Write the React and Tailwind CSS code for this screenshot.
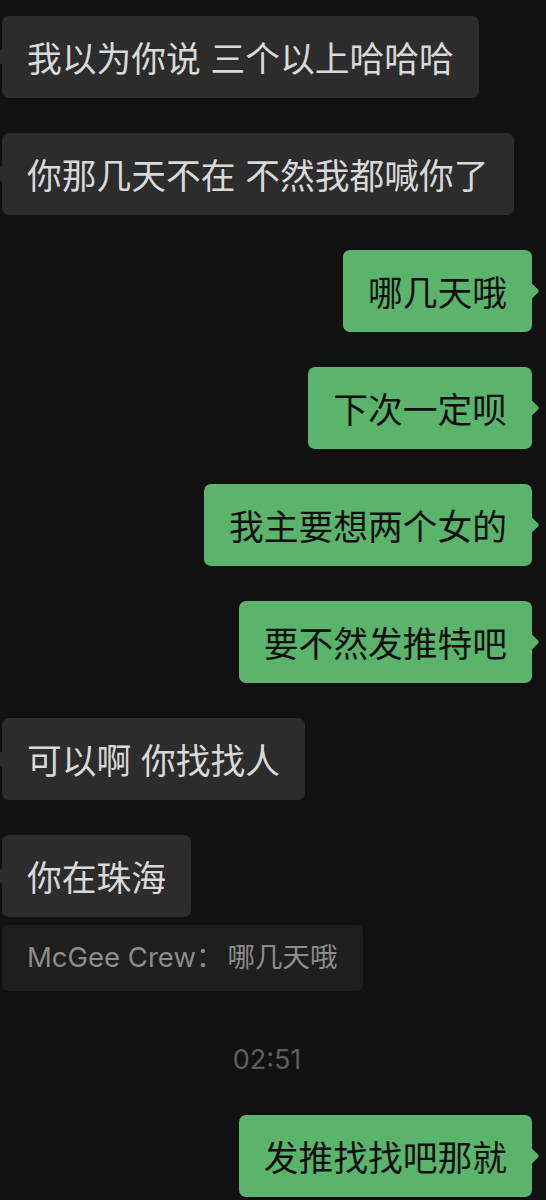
import React from "react";

const cjk = { fontFamily: '"Noto Sans CJK SC", "Noto Sans", sans-serif' };
const latin = { fontFamily: 'Inter, "Noto Sans CJK SC", sans-serif' };

function Left({ text, className = "" }) {
  return (
    <div className={"flex justify-start " + className}>
      <div className="relative rounded-[7px] bg-[#2c2c2c] px-[25px] h-[82px] flex items-center text-[34.75px] text-[#d9d9d9] [word-spacing:2px]" style={cjk}>
        <span className="absolute left-[-6px] top-[35px] w-[12px] h-[12px] rotate-45 bg-[#2c2c2c] rounded-[2px]" />
        <span className="relative whitespace-pre">{text}</span>
      </div>
    </div>
  );
}

function Right({ text, className = "" }) {
  return (
    <div className={"flex justify-end " + className}>
      <div className="relative rounded-[7px] bg-[#5bb46b] px-[25px] h-[82px] flex items-center text-[34.75px] text-[#0f0f0f]" style={cjk}>
        <span className="absolute right-[-5px] top-[35px] w-[12px] h-[12px] rotate-45 bg-[#5bb46b] rounded-[2px]" />
        <span className="relative whitespace-pre">{text}</span>
      </div>
    </div>
  );
}

export default function App() {
  return (
    <div className="w-[546px] h-[1200px] bg-[#111111] overflow-hidden">
      <div className="flex flex-col pl-[2px] pr-[14px] pt-[16px]">
        <Left text="我以为你说 三个以上哈哈哈" />
        <Left text="你那几天不在 不然我都喊你了" className="mt-[35px]" />
        <Right text="哪几天哦" className="mt-[35px]" />
        <Right text="下次一定呗" className="mt-[35px]" />
        <Right text="我主要想两个女的" className="mt-[35px]" />
        <Right text="要不然发推特吧" className="mt-[35px]" />
        <Left text="可以啊 你找找人" className="mt-[35px]" />
        <Left text="你在珠海" className="mt-[35px]" />
        <div className="flex justify-start mt-[8px]">
          <div className="rounded-[6px] bg-[#1e1e1e] h-[66px] pl-[25px] pr-[26px] flex items-center text-[27.5px] text-[#8c8c8c]" style={latin}>
            <span>McGee Crew：</span>
            <span className="ml-[4px]">哪几天哦</span>
          </div>
        </div>
        <div className="flex justify-center mt-[40px] h-[58px] items-center text-[27px] text-[#5e5e5e]" style={latin}>
          02:51
        </div>
        <Right text="发推找找吧那就" className="mt-[26px]" />
      </div>
    </div>
  );
}
